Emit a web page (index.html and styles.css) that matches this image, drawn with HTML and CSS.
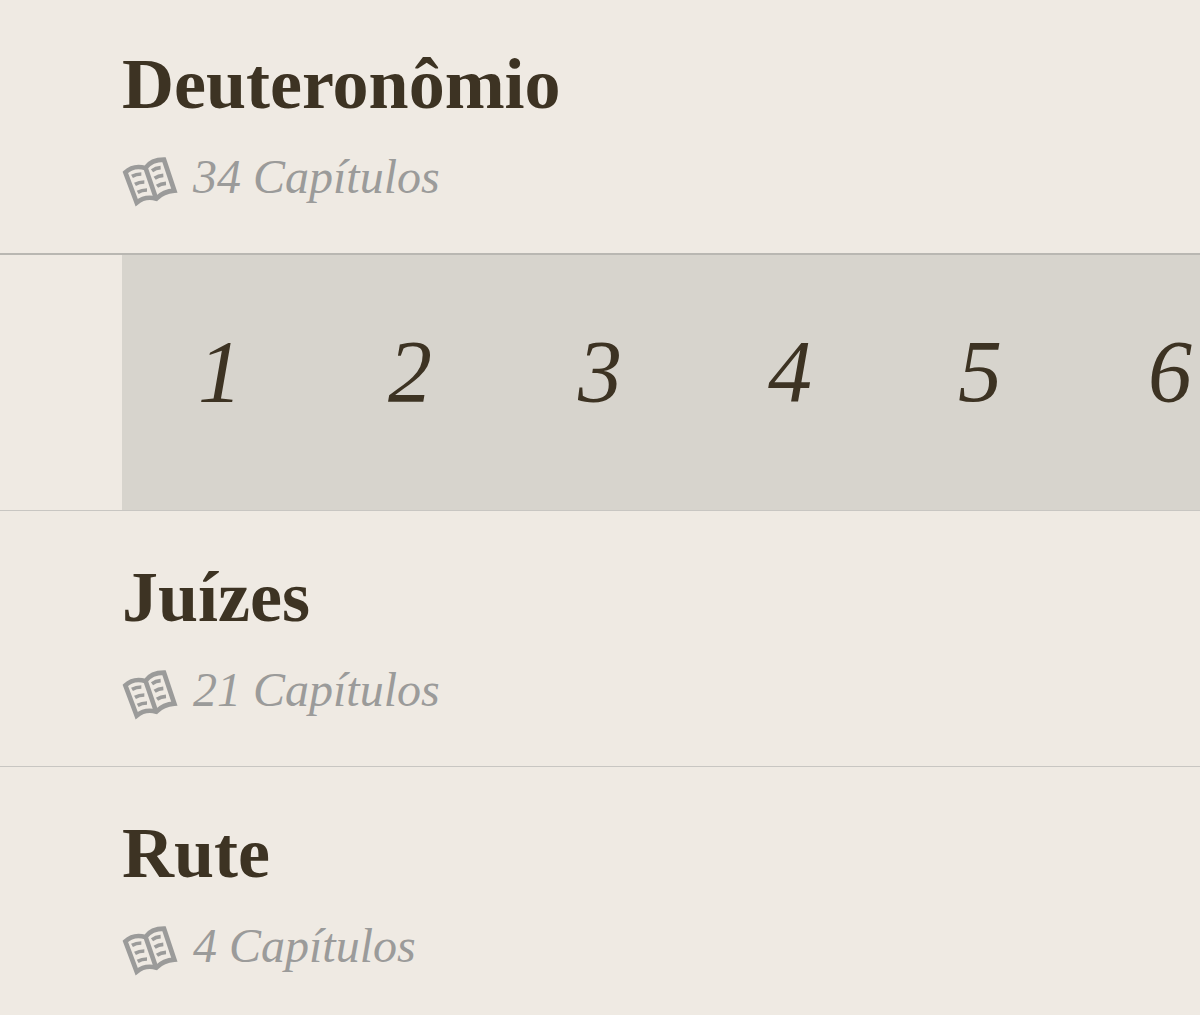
FILE: index.html
```
<!DOCTYPE html>
<html lang="pt">
<head>
<meta charset="utf-8">
<meta name="viewport" content="width=device-width, initial-scale=1">
<title>Livros</title>
<link rel="stylesheet" href="styles.css">
</head>
<body>
<svg class="sprite" aria-hidden="true">
  <symbol id="book" viewBox="36 48 171 156">
    <g fill="none" stroke="currentColor" stroke-linejoin="miter">
      <path stroke-width="14" d="M46 97Q70 74 106 84Q124 59 162 59L193 152Q160 154 139 176Q105 167 80 188Z"/>
      <path stroke-width="14" d="M106 82L139 178"/>
      <path stroke-width="11" d="M66 109Q78 102 94 102M75 133Q87 126 103 126M83 157Q95 150 111 150M126 92Q137 84 152 83M134 115Q145 107 160 106M141 139Q152 131 168 130"/>
    </g>
  </symbol>
</svg>
<main class="books">
  <section class="book">
    <h2 class="title">Deuteronômio</h2>
    <p class="meta"><svg class="icon" aria-hidden="true"><use href="#book"/></svg><span>34 Capítulos</span></p>
  </section>
  <div class="drawer">
    <nav class="chapters" aria-label="Capítulos">
      <a class="chapter" href="#1">1</a>
      <a class="chapter" href="#2">2</a>
      <a class="chapter" href="#3">3</a>
      <a class="chapter" href="#4">4</a>
      <a class="chapter" href="#5">5</a>
      <a class="chapter" href="#6">6</a>
    </nav>
  </div>
  <section class="book">
    <h2 class="title">Juízes</h2>
    <p class="meta"><svg class="icon" aria-hidden="true"><use href="#book"/></svg><span>21 Capítulos</span></p>
  </section>
  <section class="book">
    <h2 class="title">Rute</h2>
    <p class="meta"><svg class="icon" aria-hidden="true"><use href="#book"/></svg><span>4 Capítulos</span></p>
  </section>
</main>
</body>
</html>
```
FILE: styles.css
```
* {
  box-sizing: border-box;
}

body {
  margin: 0;
  background: #ffffff;
  color: #3d3323;
  font-family: "Liberation Serif", "Times New Roman", serif;
}

.sprite {
  position: absolute;
  width: 0;
  height: 0;
}

.books {
  background: #efeae3;
  overflow: hidden;
}

.book {
  padding: 44px 0 40px 122px;
  border-bottom: 1px solid #c8c6c2;
}

.book:first-child {
  padding-top: 42px;
  border-bottom: 2px solid #b9b7b2;
}

.book:last-child {
  padding-bottom: 33px;
  border-bottom: 0;
}

.title {
  margin: 0;
  font-size: 72px;
  line-height: 84px;
  font-weight: 700;
}

.meta {
  display: flex;
  align-items: center;
  gap: 14px;
  margin: 15px 0 0;
  color: #9b9b9a;
  font-size: 48px;
  line-height: 72px;
  font-style: italic;
}

.icon {
  width: 57px;
  height: 52px;
  margin-top: 10px;
}

.drawer {
  padding-left: 122px;
  border-bottom: 1px solid #c8c6c2;
}

.chapters {
  display: flex;
  gap: 146px;
  padding: 67px 0 88px 76px;
  background: #d7d4cd;
}

.chapter {
  flex: none;
  overflow: hidden;
  color: inherit;
  font-size: 88px;
  line-height: 100px;
  font-style: italic;
  text-decoration: none;
}
```
